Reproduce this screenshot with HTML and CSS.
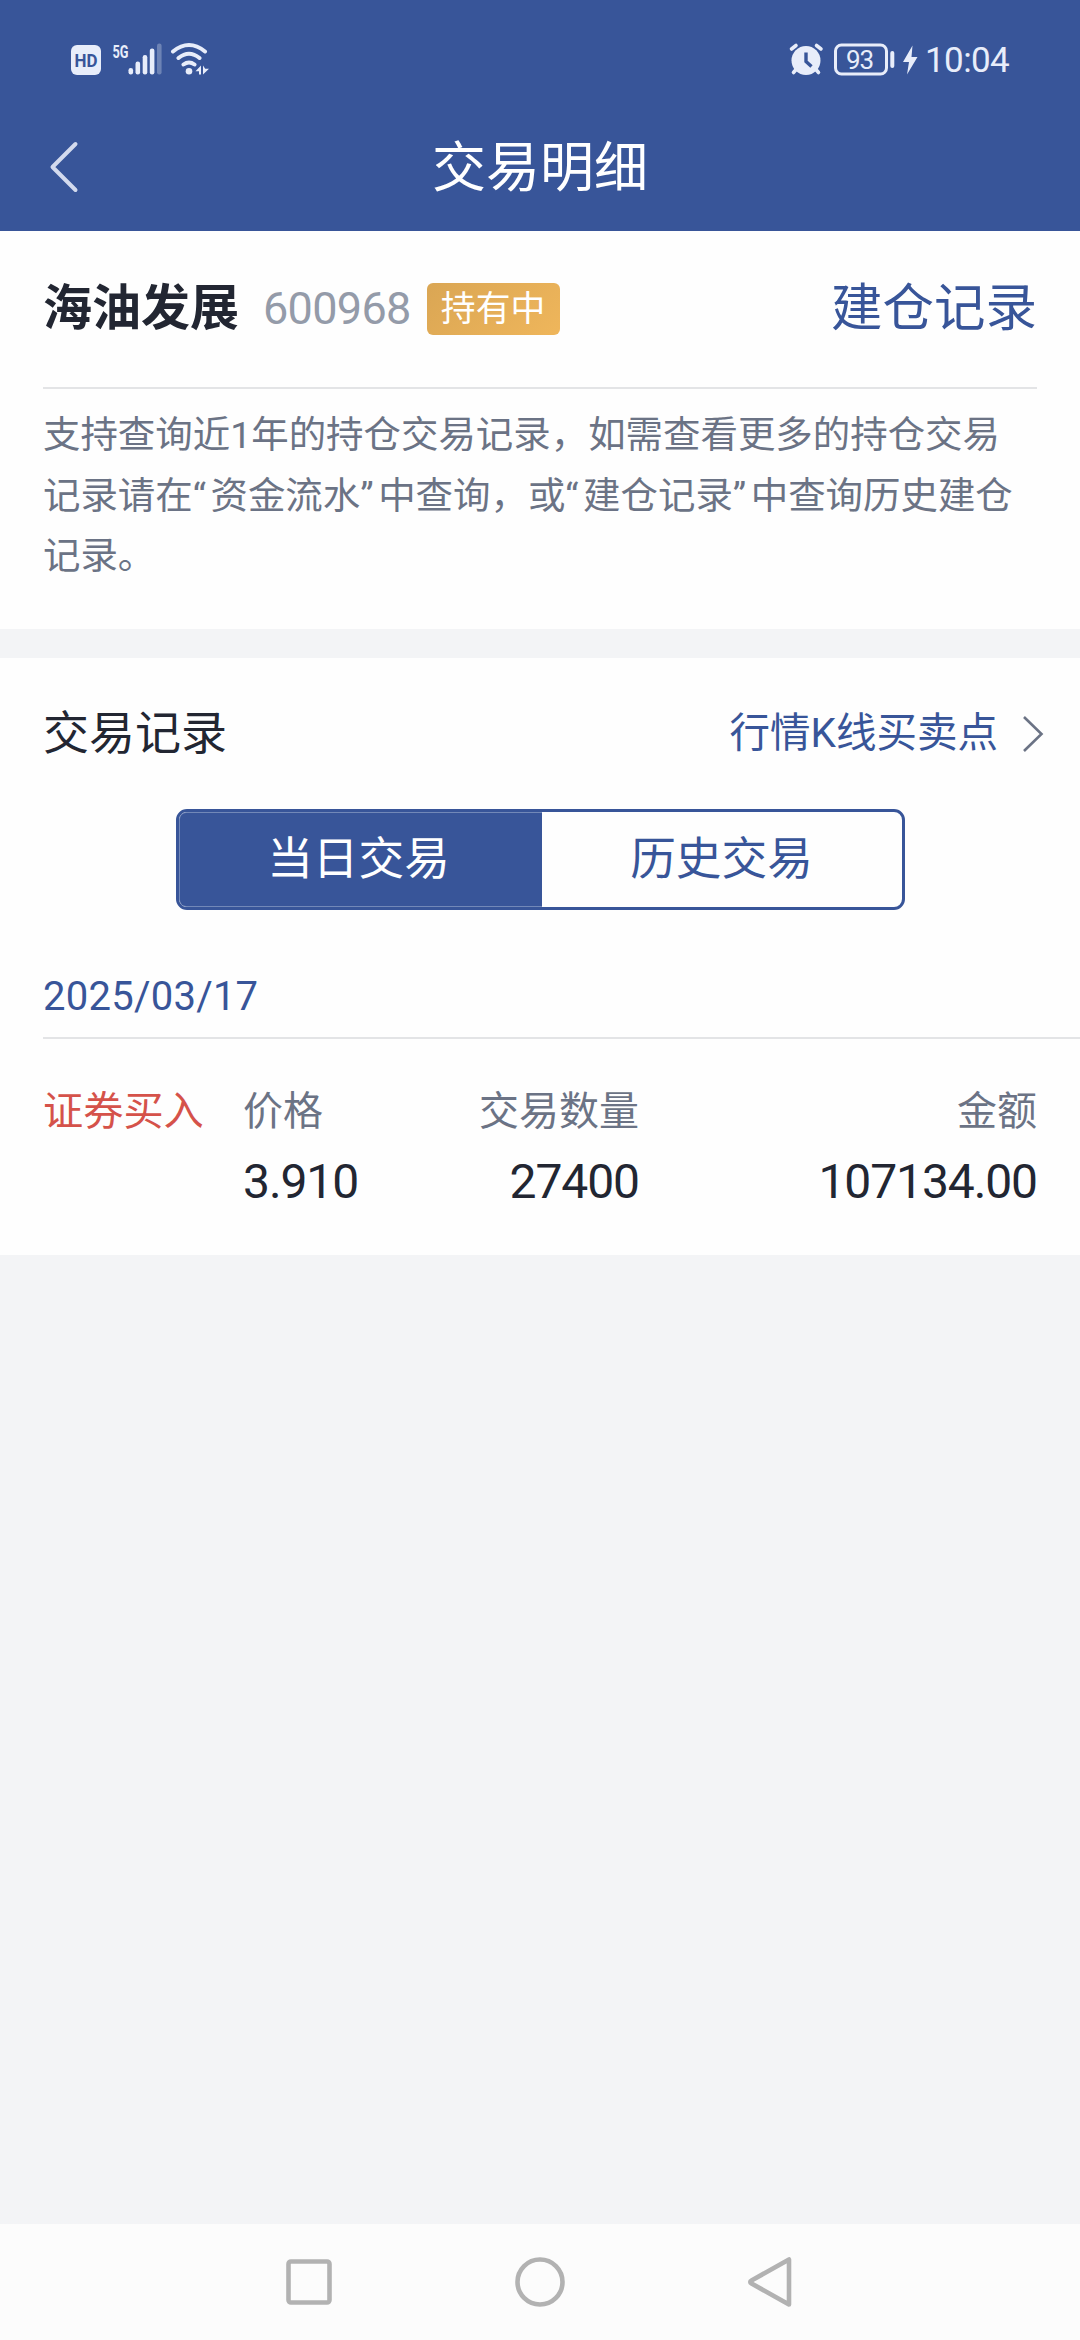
FILE: index.html
```html
<!DOCTYPE html>
<html lang="zh-CN">
<head>
<meta charset="utf-8">
<title>交易明细</title>
<link rel="stylesheet" href="styles.css">
</head>
<body>
<header class="header">
  <div class="status">
    <svg class="status-left" viewBox="70 40 142 40" width="142" height="40">
      <rect x="71" y="45" width="30" height="30" rx="6" fill="#e8edfa"/>
      <text x="86" y="67" class="hd" textLength="23" lengthAdjust="spacingAndGlyphs">HD</text>
      <text x="120.500" y="57.500" class="net" textLength="16" lengthAdjust="spacingAndGlyphs">5G</text>
      <g fill="#e8edfa">
        <rect x="128.500" y="68" width="4.600" height="6.500" rx="2.200"/>
        <rect x="135.500" y="61.500" width="4.600" height="13" rx="2.200"/>
        <rect x="142.700" y="55" width="4.600" height="19.500" rx="2.200"/>
        <rect x="149.800" y="48.500" width="4.600" height="26" rx="2.200"/>
        <rect x="157" y="43.500" width="4.600" height="31" rx="2.200" opacity=".3"/>
        <circle cx="189" cy="71.300" r="3.300"/>
        <path d="M201 65.500v9h-2v-3.200h-3.500zM203 65.500v9l6-5.800h-3.800z"/>
      </g>
      <g fill="none" stroke="#e8edfa" stroke-width="4" stroke-linecap="round">
        <path d="M173 51.500Q189 38.500 205 51.500M178.500 58Q189 49.500 199.500 58M183.500 64.500Q189 60.500 194.500 64.500"/>
      </g>
    </svg>
    <div class="status-right">
      <svg viewBox="788 40 132 40" width="132" height="40">
        <circle cx="806" cy="60.500" r="14.500" fill="#e8edfa"/>
        <path d="M791.500 49L796 45.500M816.500 45.500L821 49M796.500 69L793.500 72.500M815.500 69L818.500 72.500" stroke="#e8edfa" stroke-width="3.600" stroke-linecap="round"/>
        <path d="M806 52.500V61.500L811.500 66.500" fill="none" stroke="#385599" stroke-width="3.400"/>
        <rect x="835.500" y="45" width="51" height="29" rx="6" fill="none" stroke="#e8edfa" stroke-width="3"/>
        <rect x="890.300" y="51" width="4" height="17" rx="2" fill="#e8edfa"/>
        <text x="860" y="69" class="battery" textLength="28">93</text>
        <path d="M912.500 45.500L903 62h6l-2 12.500L917.500 57h-6z" fill="#e8edfa"/>
      </svg>
      <span class="clock">10:04</span>
    </div>
  </div>
  <div class="titlebar">
    <svg class="back" width="30" height="52" viewBox="0 0 30 52"><path d="M26.500 3L3.500 26L26.500 49" fill="none" stroke="#d3daee" stroke-width="4" stroke-linecap="round" stroke-linejoin="round"/></svg>
    <h1 class="title">交易明细</h1>
  </div>
</header>

<section class="stock">
  <div class="stock-head">
    <span class="stock-name">海油发展</span>
    <span class="stock-code">600968</span>
    <span class="badge">持有中</span>
    <a class="open-log">建仓记录</a>
  </div>
  <p class="note">支持查询近1年的持仓交易记录，如需查看更多的持仓交易<br>记录请在<span class="q">“</span>资金流水<span class="q">”</span>中查询，或<span class="q">“</span>建仓记录<span class="q">”</span>中查询历史建仓<br>记录。</p>
</section>

<section class="records">
  <div class="records-head">
    <h2 class="records-title">交易记录</h2>
    <a class="kline">行情K线买卖点</a>
    <svg class="chevron" width="22" height="38" viewBox="0 0 22 38"><path d="M2 2L19.500 19L2 36" fill="none" stroke="#6b7385" stroke-width="2.600"/></svg>
  </div>
  <div class="tabs">
    <div class="tab tab-on">当日交易</div>
    <div class="tab">历史交易</div>
  </div>
  <div class="date">2025/03/17</div>
  <div class="trade">
    <div class="side">证券买入</div>
    <div class="cell"><span class="label">价格</span><span class="value">3.910</span></div>
    <div class="cell cell-end"><span class="label">交易数量</span><span class="value">27400</span></div>
    <div class="cell cell-end"><span class="label">金额</span><span class="value">107134.00</span></div>
  </div>
</section>

<nav class="navbar">
  <svg width="52" height="52" viewBox="0 0 52 52"><rect x="5.500" y="5.500" width="41" height="41" rx="2.500"/></svg>
  <svg width="52" height="52" viewBox="0 0 52 52"><circle cx="26" cy="26" r="22.500"/></svg>
  <svg width="52" height="52" viewBox="0 0 52 52"><path d="M44 3.500V48.500L6.500 27.500Q4 26 6.500 24.500Z" stroke-linejoin="round"/></svg>
</nav>
</body>
</html>
```
FILE: styles.css
```css
* { box-sizing: border-box; }

body {
  margin: 0;
  width: 1080px;
  height: 2340px;
  display: flex;
  flex-direction: column;
  background: #f3f4f6;
  font-family: Roboto, "Noto Sans CJK SC", sans-serif;
  color: #222632;
  white-space: nowrap;
}

h1, h2, p { margin: 0; font-weight: 400; }

.header {
  height: 231px;
  background: #385599;
  color: #fff;
}

.status {
  height: 100px;
  padding: 20px 70px 0;
  display: flex;
  justify-content: space-between;
  align-items: center;
}

.status-right {
  display: flex;
  align-items: center;
  color: #e8edfa;
}

.hd {
  font: 700 19px Roboto, sans-serif;
  fill: #385599;
  text-anchor: middle;
}

.net {
  font: 700 19px Roboto, sans-serif;
  fill: #e8edfa;
  text-anchor: middle;
}

.battery {
  font: 400 26px Roboto, sans-serif;
  fill: #e8edfa;
  text-anchor: middle;
}

.clock {
  width: 90px;
  padding: 2px 0 0 5px;
  font-size: 35px;
  line-height: 40px;
  letter-spacing: -0.6px;
}

.titlebar {
  height: 131px;
  padding: 0 49px;
  display: grid;
  grid-template-columns: 30px 1fr 30px;
  align-items: center;
}

.title {
  padding-top: 4px;
  text-align: center;
  font-size: 54px;
  line-height: 130px;
}

.stock {
  height: 398px;
  padding: 0 43px;
  background: #fefefe;
}

.stock-head {
  height: 158px;
  border-bottom: 2px solid #e3e4e6;
  display: flex;
  align-items: center;
  line-height: 156px;
}

.stock-name {
  font-size: 49px;
  font-weight: 700;
}

.stock-code {
  margin-left: 24px;
  font-size: 45px;
  letter-spacing: -0.7px;
  line-height: 154px;
  color: #949ba9;
}

.badge {
  width: 133px;
  height: 52px;
  margin-left: 16px;
  border-radius: 6px;
  background: linear-gradient(135deg, #daa654, #efb65b);
  color: #fff;
  font-size: 34.8px;
  line-height: 52px;
  text-align: center;
}

.open-log {
  margin-left: auto;
  font-size: 51.5px;
  line-height: 158px;
  color: #385599;
}

.note {
  padding-top: 16px;
  font-size: 37.45px;
  line-height: 60.5px;
  color: #6b7385;
}

.q { letter-spacing: 4.5px; }

.records {
  height: 597px;
  margin-top: 29px;
  background: #fefefe;
}

.records-head {
  height: 151px;
  padding: 0 36px 0 43px;
  display: flex;
  align-items: center;
  line-height: 151px;
}

.records-title { font-size: 46px; }

.kline {
  margin-left: auto;
  font-size: 40.5px;
  color: #385599;
}

.chevron { margin-left: 24px; }

.tabs {
  width: 729px;
  height: 101px;
  margin: 0 auto;
  border: 3px solid #385599;
  border-radius: 11px;
  display: grid;
  grid-template-columns: 363px 1fr;
  overflow: hidden;
}

.tab {
  color: #385599;
  font-size: 45.7px;
  line-height: 95px;
  text-align: center;
}

.tab-on {
  padding-right: 4px;
  background: #385599;
  border: 1px solid #7288b8;
  border-right: 0;
  border-radius: 7px 0 0 7px;
  color: #fff;
  line-height: 93px;
}

.date {
  height: 129px;
  margin-left: 43px;
  padding-top: 59px;
  border-bottom: 2px solid #e3e4e6;
  font-size: 40px;
  line-height: 56px;
  letter-spacing: 0.25px;
  color: #385599;
}

.trade {
  padding: 41px 43px 0;
  display: grid;
  grid-template-columns: 200px 200px 196px 398px;
}

.side {
  color: #d5524a;
  font-size: 40.2px;
  line-height: 64px;
}

.cell {
  display: flex;
  flex-direction: column;
}

.cell-end { align-items: flex-end; }

.label {
  font-size: 40px;
  line-height: 64px;
  color: #6b7385;
}

.value {
  font-size: 48px;
  line-height: 76px;
  letter-spacing: -1.1px;
}

.navbar {
  height: 116px;
  margin-top: auto;
  padding: 0 283px;
  display: flex;
  justify-content: space-between;
  align-items: center;
  background: #fcfcfc;
}

.navbar svg {
  fill: none;
  stroke: #b2b2b2;
  stroke-width: 4.6;
}
```
